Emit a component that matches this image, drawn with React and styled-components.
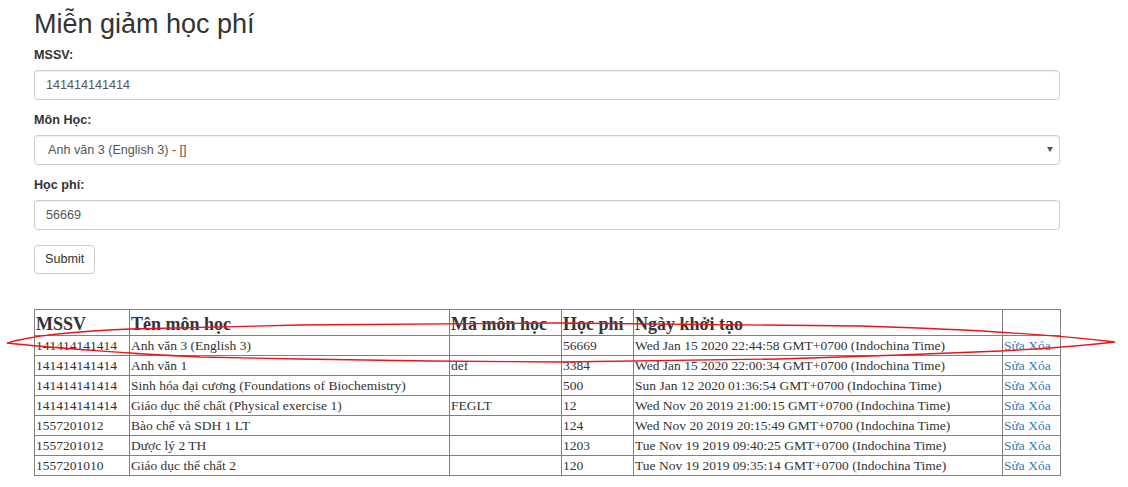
import React from 'react';
import styled, { createGlobalStyle } from 'styled-components';

const GlobalStyle = createGlobalStyle`
  html, body {
    margin: 0;
    padding: 0;
    background: #fff;
  }
  body {
    font-family: "Liberation Sans", Arial, sans-serif;
    color: #333;
  }
`;

const Page = styled.div`
  position: relative;
  display: flow-root;
  width: 1128px;
  min-height: 487px;
  padding-left: 34px;
  box-sizing: border-box;
`;

const Content = styled.div`
  width: 1026px;
`;

const Title = styled.h2`
  margin: 10px 0 6px;
  font-family: "Liberation Sans", Arial, sans-serif;
  font-size: 27px;
  font-weight: 400;
  line-height: 29.7px;
  color: #333;
`;

const FormGroup = styled.div`
  margin-bottom: 11px;
`;

const Label = styled.label`
  display: block;
  font-size: 12.6px;
  font-weight: 700;
  line-height: 18px;
  margin-bottom: 6px;
  color: #333;
`;

const fieldBase = `
  display: block;
  width: 100%;
  height: 30px;
  box-sizing: border-box;
  padding: 5px 11px;
  font-family: "Liberation Sans", Arial, sans-serif;
  font-size: 12.6px;
  color: #555;
  background: #fff;
  border: 1px solid #ccc;
  border-radius: 3.6px;
  box-shadow: inset 0 1px 1px rgba(0, 0, 0, 0.075);
  outline: none;
`;

const Input = styled.input`
  ${fieldBase}
`;

const SelectWrap = styled.div`
  position: relative;
`;

const Select = styled.select`
  ${fieldBase}
  appearance: none;
  -webkit-appearance: none;
  padding-left: 13px;
`;

const Caret = styled.span`
  position: absolute;
  right: 7px;
  top: 12px;
  width: 0;
  height: 0;
  border-left: 3px solid transparent;
  border-right: 3px solid transparent;
  border-top: 5px solid #555;
  pointer-events: none;
`;

const SubmitButton = styled.button`
  margin-top: 4px;
  height: 29px;
  padding: 0 10px;
  font-family: "Liberation Sans", Arial, sans-serif;
  font-size: 12.6px;
  color: #333;
  background: #fff;
  border: 1px solid #ccc;
  border-radius: 3.6px;
`;

const Table = styled.table`
  margin-top: 35px;
  width: 1026px;
  table-layout: fixed;
  border-collapse: collapse;
  font-family: "Liberation Serif", "Times New Roman", serif;
  color: #333;
`;

const HeadCell = styled.th`
  height: 25px;
  padding: 0 1px;
  text-align: left;
  vertical-align: bottom;
  font-size: 18px;
  font-weight: 700;
  line-height: 21px;
  border: 1px solid #808080;
  white-space: nowrap;
  overflow: hidden;
`;

const Cell = styled.td`
  height: 19px;
  padding: 0 1px;
  font-size: 13.5px;
  line-height: 19px;
  border: 1px solid #808080;
  white-space: nowrap;
  overflow: hidden;
`;

const ActionLink = styled.a`
  color: #337ab7;
  text-decoration: none;
`;

const Annotation = styled.svg`
  position: absolute;
  left: 0;
  top: 0;
  width: 1128px;
  height: 487px;
  pointer-events: none;
`;

const columns = [
  { title: 'MSSV', width: 95 },
  { title: 'Tên môn học', width: 320 },
  { title: 'Mã môn học', width: 112 },
  { title: 'Học phí', width: 72 },
  { title: 'Ngày khởi tạo', width: 369 },
  { title: '', width: 58 },
];

const rows = [
  ['141414141414', 'Anh văn 3 (English 3)', '', '56669', 'Wed Jan 15 2020 22:44:58 GMT+0700 (Indochina Time)'],
  ['141414141414', 'Anh văn 1', 'def', '3384', 'Wed Jan 15 2020 22:00:34 GMT+0700 (Indochina Time)'],
  ['141414141414', 'Sinh hóa đại cương (Foundations of Biochemistry)', '', '500', 'Sun Jan 12 2020 01:36:54 GMT+0700 (Indochina Time)'],
  ['141414141414', 'Giáo dục thể chất (Physical exercise 1)', 'FEGLT', '12', 'Wed Nov 20 2019 21:00:15 GMT+0700 (Indochina Time)'],
  ['1557201012', 'Bào chế và SDH 1 LT', '', '124', 'Wed Nov 20 2019 20:15:49 GMT+0700 (Indochina Time)'],
  ['1557201012', 'Dược lý 2 TH', '', '1203', 'Tue Nov 19 2019 09:40:25 GMT+0700 (Indochina Time)'],
  ['1557201010', 'Giáo dục thể chất 2', '', '120', 'Tue Nov 19 2019 09:35:14 GMT+0700 (Indochina Time)'],
];

// vòng tròn đỏ đánh dấu dòng vừa thêm
const loop =
  'M7,343 C30,336 80,331 130,329 L300,325 L560,323 L860,326 C960,329 1040,333 1115,342 ' +
  'C1080,346 1040,349 1000,351 L900,355 L780,359 L560,362 L430,361 L300,359 L200,357 C160,355 140,354 130,353 ' +
  'C90,350 40,347 7,343 Z';

function App() {
  return (
    <Page>
      <GlobalStyle />
      <Content>
        <Title>Miễn giảm học phí</Title>
        <form onSubmit={(e) => e.preventDefault()}>
          <FormGroup>
            <Label>MSSV:</Label>
            <Input type="text" defaultValue="141414141414" />
          </FormGroup>
          <FormGroup>
            <Label>Môn Học:</Label>
            <SelectWrap>
              <Select defaultValue="av3">
                <option value="av3">Anh văn 3 (English 3) - []</option>
              </Select>
              <Caret />
            </SelectWrap>
          </FormGroup>
          <FormGroup>
            <Label>Học phí:</Label>
            <Input type="text" defaultValue="56669" />
          </FormGroup>
          <SubmitButton type="submit">Submit</SubmitButton>
        </form>

        <Table>
          <colgroup>
            {columns.map((c, i) => (
              <col key={i} style={{ width: c.width }} />
            ))}
          </colgroup>
          <thead>
            <tr>
              {columns.map((c, i) => (
                <HeadCell key={i}>{c.title}</HeadCell>
              ))}
            </tr>
          </thead>
          <tbody>
            {rows.map((r, i) => (
              <tr key={i}>
                {r.map((v, j) => (
                  <Cell key={j}>{v}</Cell>
                ))}
                <Cell>
                  <ActionLink href="#">Sửa</ActionLink> <ActionLink href="#">Xóa</ActionLink>
                </Cell>
              </tr>
            ))}
          </tbody>
        </Table>
      </Content>
      <Annotation viewBox="0 0 1128 487">
        <path d={loop} fill="none" stroke="#e8151b" strokeWidth="1.3" />
      </Annotation>
    </Page>
  );
}

export default App;
